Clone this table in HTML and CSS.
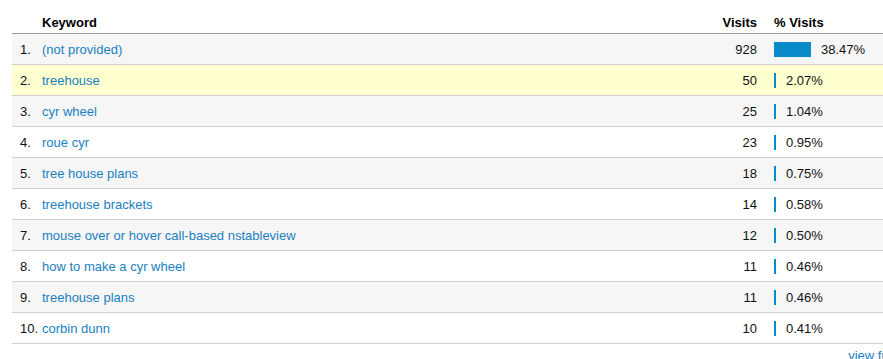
FILE: index.html
```html
<!DOCTYPE html>
<html>
<head>
<meta charset="utf-8">
<link rel="stylesheet" href="styles.css">
</head>
<body>
<div class="report">
  <div class="row head">
    <span class="num"></span>
    <span class="kw">Keyword</span>
    <span class="visits">Visits</span>
    <span class="pct">% Visits</span>
  </div>
  <div class="row alt"><span class="num">1.</span><a class="kw">(not provided)</a><span class="visits">928</span><span class="pct"><i class="bar" style="width:37px"></i>38.47%</span></div>
  <div class="row hover"><span class="num">2.</span><a class="kw">treehouse</a><span class="visits">50</span><span class="pct"><i class="bar" style="width:2px"></i>2.07%</span></div>
  <div class="row alt"><span class="num">3.</span><a class="kw">cyr wheel</a><span class="visits">25</span><span class="pct"><i class="bar" style="width:2px"></i>1.04%</span></div>
  <div class="row"><span class="num">4.</span><a class="kw">roue cyr</a><span class="visits">23</span><span class="pct"><i class="bar" style="width:2px"></i>0.95%</span></div>
  <div class="row alt"><span class="num">5.</span><a class="kw">tree house plans</a><span class="visits">18</span><span class="pct"><i class="bar" style="width:2px"></i>0.75%</span></div>
  <div class="row"><span class="num">6.</span><a class="kw">treehouse brackets</a><span class="visits">14</span><span class="pct"><i class="bar" style="width:2px"></i>0.58%</span></div>
  <div class="row alt"><span class="num">7.</span><a class="kw">mouse over or hover call-based nstableview</a><span class="visits">12</span><span class="pct"><i class="bar" style="width:2px"></i>0.50%</span></div>
  <div class="row"><span class="num">8.</span><a class="kw">how to make a cyr wheel</a><span class="visits">11</span><span class="pct"><i class="bar" style="width:2px"></i>0.46%</span></div>
  <div class="row alt"><span class="num">9.</span><a class="kw">treehouse plans</a><span class="visits">11</span><span class="pct"><i class="bar" style="width:2px"></i>0.46%</span></div>
  <div class="row"><span class="num">10.</span><a class="kw">corbin dunn</a><span class="visits">10</span><span class="pct"><i class="bar" style="width:2px"></i>0.41%</span></div>
  <div class="footer"><a class="more">view full report</a></div>
</div>
</body>
</html>
```
FILE: styles.css
```css
html, body {
  margin: 0;
  padding: 0;
  overflow: hidden;
  background: #fff;
}
body {
  font-family: "Liberation Sans", Arial, Helvetica, sans-serif;
  font-size: 13px;
  color: #111;
}
.report {
  width: 929px;
  margin-left: 12px;
}
.row {
  display: grid;
  grid-template-columns: 22px 655px 60px 184px;
  align-items: center;
  padding-left: 8px;
  height: 30px;
  line-height: 15px;
  border-bottom: 1px solid #cfcfcf;
  background: #fff;
}
.row.alt { background: #f6f6f6; }
.row.hover { background: #ffffd0; }
.row.head {
  height: 34px;
  align-items: end;
  box-sizing: border-box;
  padding-bottom: 3px;
  border-bottom: 1px solid #9a9a9a;
  font-weight: bold;
  color: #000;
}
.num { color: #111; white-space: nowrap; }
.kw {
  color: #1a80c2;
  text-decoration: none;
  white-space: nowrap;
}
.head .kw { color: #000; }
.visits { text-align: right; }
.pct {
  padding-left: 17px;
  display: flex;
  align-items: center;
}
.bar {
  display: block;
  height: 15px;
  background: #0a8bc9;
  margin-right: 10px;
}
.footer {
  display: flex;
  justify-content: flex-end;
  padding-top: 4px;
  padding-right: 9px;
  line-height: 15px;
}
.more {
  color: #1a80c2;
  text-decoration: none;
  white-space: nowrap;
}
```
